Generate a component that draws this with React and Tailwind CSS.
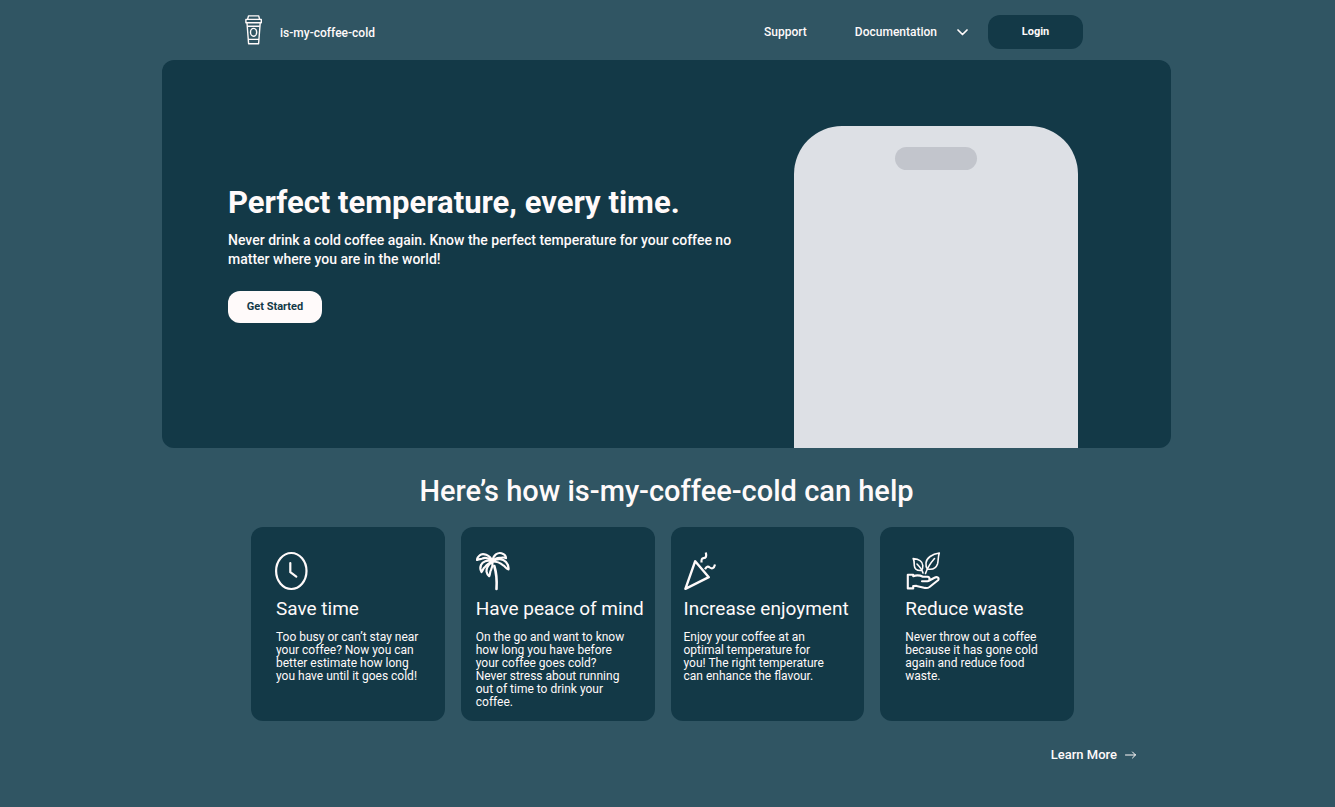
import React from "react";

function CoffeeCupIcon() {
  return (
    <svg width="18" height="30" viewBox="0 0 18 30" fill="none" stroke="currentColor" strokeWidth="1.4" strokeLinejoin="round" aria-hidden="true">
      <path d="M2.6 4.2 3.5 0.9H13.7L14.6 4.2" />
      <path d="M0.9 4.4H16.3V7.8H0.9Z" />
      <path d="M2 8 3.6 28.8H13.6L15.2 8" />
      <path d="M2.4 11.2H14.8M3.2 24.4H14" />
      <ellipse cx="8.6" cy="17.3" rx="3.1" ry="3.9" />
    </svg>
  );
}

function ClockIcon() {
  return (
    <svg width="34" height="40" viewBox="0 0 34 40" fill="none" stroke="currentColor" strokeWidth="2.2" strokeLinecap="round" strokeLinejoin="round" aria-hidden="true" className="-ml-px">
      <ellipse cx="16.3" cy="20" rx="15.2" ry="18" />
      <path d="M15.3 12V21.2L21.3 25.6" />
    </svg>
  );
}

function PalmIcon() {
  return (
    <svg width="34" height="40" viewBox="0 0 34 40" fill="none" stroke="currentColor" strokeWidth="2.2" strokeLinecap="round" strokeLinejoin="round" aria-hidden="true">
      <path d="M16.5 10.5C14 3.5 6.5 1.5 3.5 4.5C1.8 6 1 7.5 1 9C3.5 7.3 5 8.7 6.5 7.5C9 6 13 7.5 16.5 10.5Z" />
      <path d="M16.5 10.5C17 3.5 22 1.3 25.5 2.2C29 3.2 30 5.5 30 7.2C27.5 5.5 26 7.3 24 6.8C21 6.5 18.5 8 16.5 10.5Z" />
      <path d="M16.5 10.5C21.5 6.8 27 7.5 30 11C32.2 13.5 32.8 16 32.5 18.3C29.5 17.8 29.3 15 27 14.2C24 11.5 20.5 10.5 16.5 10.5Z" />
      <path d="M16.5 10.5C11 8.5 6.5 10.5 5 14C4 16.5 4.3 19 5.5 21C7 19.5 7 17 9 16C11 13 13 12 16.5 10.5Z" />
      <path d="M16.5 10.5C12 13.5 10 18 10.5 20.5C11 23 12 24.5 13.2 25.2C14.5 22.5 13.7 21 15 19C16.5 16 16.8 13.5 16.5 10.5Z" />
      <path d="M18.3 15C20.5 22 21 30 20.5 38" strokeWidth="2.6" />
    </svg>
  );
}

function PartyIcon() {
  return (
    <svg width="34" height="40" viewBox="0 0 34 40" fill="none" stroke="currentColor" strokeWidth="2.2" strokeLinejoin="round" aria-hidden="true">
      <path d="M11.2 10.2 1.4 37.8 24.8 26.2Z" strokeWidth="2.4" />
      <path d="M17.5 11.5C17.3 8.5 17.5 7.5 19.5 7.2C22 7 22.8 5.5 21.8 1.5" />
      <path d="M21 18.3C22.5 15.3 24 15 25.8 16.5C28 18.2 30 17.5 31 13.5" />
    </svg>
  );
}

function PlantHandIcon() {
  return (
    <svg width="36" height="40" viewBox="0 0 36 40" fill="none" stroke="currentColor" strokeWidth="1.6" strokeLinejoin="round" strokeLinecap="round" aria-hidden="true">
      <path d="M34.3 2C27 3 21.5 7 21 12C20.7 14.5 21.3 16.5 22.5 18C27 18.8 31 17.5 32.5 13C33.5 9.5 33 5.5 34.3 2Z" />
      <path d="M29.5 7.5C25.5 12 22.5 16.5 20.5 22.5" />
      <path d="M8.2 7.5C13.5 8 17.5 10.5 17.8 14.5C18 17 17.3 18.5 16.2 19.5C12.5 19.7 9.5 18 9.3 14.5C9.2 11.5 9.3 9.5 8.2 7.5Z" />
      <path d="M12 13C14.5 15.5 17 18.5 18 22" />
      <path d="M17 30.2H22.5C25.3 30.2 25.3 26 22.5 25.7H18C15.5 24.5 12 23.6 8.2 25.2V23.7H2.8V37.4H8.2V35L11.5 34.9L20 36.9C21.5 37.2 23 37 24.5 36L33 29.3C34.8 27.2 32.2 25.3 29.5 26.7L24.8 29.2" strokeWidth="2.1" />
    </svg>
  );
}

const features = [
  {
    title: "Save time",
    text: "Too busy or can’t stay near your coffee? Now you can better estimate how long you have until it goes cold!",
    Icon: ClockIcon,
    inset: "pl-[25px] pr-4",
  },
  {
    title: "Have peace of mind",
    text: "On the go and want to know how long you have before your coffee goes cold? Never stress about running out of time to drink your coffee.",
    Icon: PalmIcon,
    inset: "pl-[15px] pr-[26px]",
  },
  {
    title: "Increase enjoyment",
    text: "Enjoy your coffee at an optimal temperature for you! The right temperature can enhance the flavour.",
    Icon: PartyIcon,
    inset: "pl-[13px] pr-[34px]",
  },
  {
    title: "Reduce waste",
    text: "Never throw out a coffee because it has gone cold again and reduce food waste.",
    Icon: PlantHandIcon,
    inset: "pl-[25px] pr-[26px]",
  },
];

function FeatureCard({ title, text, Icon, inset }) {
  return (
    <article className={`min-h-[194px] rounded-xl bg-[#133947] pt-6 pb-3 ${inset}`}>
      <Icon />
      <h3 className="mt-1 text-[19px] leading-7 whitespace-nowrap">{title}</h3>
      <p className="mt-2 text-[12px] leading-[13px]">{text}</p>
    </article>
  );
}

export default function App() {
  return (
    <div className="min-h-screen bg-[#305563] pr-0.5 font-['Roboto',sans-serif] text-[#fffafa]">
      <div className="mx-auto max-w-[1009px]">
        <header className="flex h-[60px] items-center justify-between pr-[88px] pl-[83px]">
          <a href="#home" className="flex items-center gap-[17px]">
            <CoffeeCupIcon />
            <span className="pt-1.5 text-[12px] leading-5 font-medium">is-my-coffee-cold</span>
          </a>
          <nav className="flex items-center pt-1 text-[12px] leading-5 font-medium">
            <a href="#support">Support</a>
            <button type="button" aria-haspopup="menu" className="ml-12 flex items-center gap-5">
              Documentation
              <svg width="11" height="7" viewBox="0 0 11 7" fill="none" stroke="currentColor" strokeWidth="1.7" strokeLinecap="round" strokeLinejoin="round" aria-hidden="true">
                <path d="M1 1 5.5 5.5 10 1" />
              </svg>
            </button>
            <button type="button" className="ml-5 h-[34px] w-[95px] rounded-xl bg-[#133947] text-[11px] font-bold">
              Login
            </button>
          </nav>
        </header>

        <main>
          <section className="flex items-start justify-between rounded-xl bg-[#133947] pt-[66px] pr-[93px] pl-[66px]">
            <div className="pt-[57px]">
              <h1 className="text-[31px] leading-10 font-bold">Perfect temperature, every time.</h1>
              <p className="mt-2 max-w-[520px] text-[14px] leading-[19px] font-medium">
                Never drink a cold coffee again. Know the perfect temperature for your coffee no matter where you are in the world!
              </p>
              <button type="button" className="mt-[22px] h-8 w-[94px] rounded-xl bg-[#fffafa] text-[11px] font-bold text-[#133947]">
                Get Started
              </button>
            </div>
            <div className="flex h-[322px] w-[284px] justify-center rounded-t-[48px] bg-[#dde0e5] pt-[21px]">
              <div className="h-[23px] w-[82px] rounded-full bg-[#c2c5cc]" />
            </div>
          </section>

          <section className="pt-[23px]">
            <h2 className="text-center text-[29px] leading-10 font-medium">Here’s how is-my-coffee-cold can help</h2>
            <div className="mt-4 grid grid-cols-4 gap-4 pr-[97px] pl-[89px]">
              {features.map((feature) => (
                <FeatureCard key={feature.title} {...feature} />
              ))}
            </div>
            <div className="mt-6 flex justify-end pr-[35px]">
              <a href="#learn-more" className="flex items-center gap-2 text-[13px] leading-5 font-medium">
                Learn More
                <svg width="11" height="8" viewBox="0 0 11 8" fill="none" stroke="currentColor" strokeWidth="1" strokeLinecap="round" strokeLinejoin="round" aria-hidden="true">
                  <path d="M0.5 4H10.5M7.5 1 10.5 4 7.5 7" />
                </svg>
              </a>
            </div>
          </section>
        </main>
      </div>
    </div>
  );
}
